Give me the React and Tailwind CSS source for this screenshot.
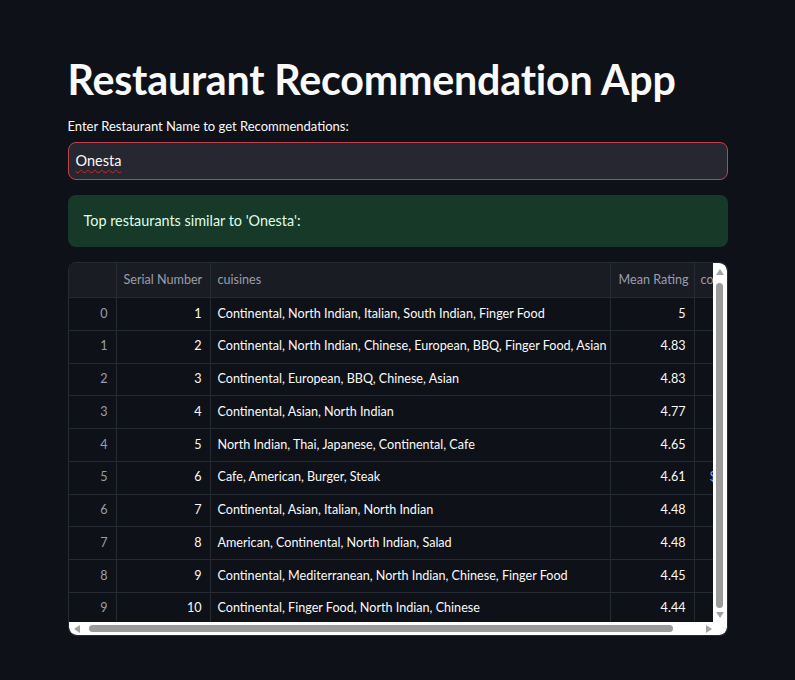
import React from 'react';

const rows = [
  [0, 1, 'Continental, North Indian, Italian, South Indian, Finger Food', '5', ''],
  [1, 2, 'Continental, North Indian, Chinese, European, BBQ, Finger Food, Asian', '4.83', ''],
  [2, 3, 'Continental, European, BBQ, Chinese, Asian', '4.83', ''],
  [3, 4, 'Continental, Asian, North Indian', '4.77', ''],
  [4, 5, 'North Indian, Thai, Japanese, Continental, Cafe', '4.65', ''],
  [5, 6, 'Cafe, American, Burger, Steak', '4.61', '$'],
  [6, 7, 'Continental, Asian, Italian, North Indian', '4.48', ''],
  [7, 8, 'American, Continental, North Indian, Salad', '4.48', ''],
  [8, 9, 'Continental, Mediterranean, North Indian, Chinese, Finger Food', '4.45', ''],
  [9, 10, 'Continental, Finger Food, North Indian, Chinese', '4.44', ''],
];

const cols = 'grid grid-cols-[48px_94px_400px_84px_120px]';

const Triangle = ({ dir }) => {
  const pts = {
    up: '0,6 4,0 8,6',
    down: '0,0 8,0 4,6',
    left: '6,0 6,8 0,4',
    right: '0,0 0,8 6,4',
  };
  const vertical = dir === 'up' || dir === 'down';
  return (
    <svg width={vertical ? 8 : 6} height={vertical ? 6 : 8} viewBox={vertical ? '0 0 8 6' : '0 0 6 8'}>
      <polygon points={pts[dir]} fill="#a3a3a3" />
    </svg>
  );
};

const DataTable = () => (
  <div className="relative mt-[15px] h-[374px] w-[660px] overflow-hidden rounded-lg border border-[#262a33]">
    <div className="h-[361px] w-[646px] overflow-hidden">
      <div className={`${cols} h-[35px] bg-[#1a1c24] text-[12.6px] leading-none whitespace-nowrap text-[#9a9ea9]`}>
        <div className="border-r border-b border-[#262a33]" />
        <div className="flex items-center border-r border-b border-[#262a33] pl-[7px]">Serial Number</div>
        <div className="flex items-center border-r border-b border-[#262a33] pl-[7px]">cuisines</div>
        <div className="flex items-center border-r border-b border-[#262a33] pl-[8px]">Mean Rating</div>
        <div className="flex items-center border-b border-[#262a33] pl-[6px]">cost</div>
      </div>
      {rows.map(([idx, serial, cuisine, rating, cost]) => (
        <div key={idx} className={`${cols} h-[32.75px] bg-[#0e1117] text-[12.6px] leading-none whitespace-nowrap text-[#fafafa]`}>
          <div className="flex items-center justify-end border-r border-b border-[#262a33] pr-[8px] text-[#9a9ea9]">{idx}</div>
          <div className="flex items-center justify-end border-r border-b border-[#262a33] pr-[8px]">{serial}</div>
          <div className="flex items-center overflow-hidden border-r border-b border-[#262a33] pl-[7px]">{cuisine}</div>
          <div className="flex items-center justify-end border-r border-b border-[#262a33] pr-[8px]">{rating}</div>
          <div className="flex items-center border-b border-[#262a33] pl-[15px] text-[#8fb3e0]">{cost}</div>
        </div>
      ))}
    </div>

    {/* vertical scrollbar */}
    <div className="absolute top-0 right-0 flex h-[361px] w-[14px] flex-col items-center rounded-tr-lg bg-white">
      <div className="mt-[6px]"><Triangle dir="up" /></div>
      <div className="mt-[8px] w-[7px] flex-1 rounded-full bg-[#9b9b9b]" />
      <div className="mt-[4px] mb-[6px]"><Triangle dir="down" /></div>
    </div>

    {/* horizontal scrollbar */}
    <div className="absolute right-0 bottom-0 left-0 flex h-[13px] items-center rounded-b-lg bg-white">
      <div className="ml-[5px]"><Triangle dir="left" /></div>
      <div className="ml-[9px] h-[7px] w-[584px] rounded-full bg-[#9b9b9b]" />
      <div className="ml-[33px]"><Triangle dir="right" /></div>
    </div>
  </div>
);

export default function App() {
  return (
    <div className="min-h-[680px] bg-[#0e1117] text-[#fafafa]" style={{ fontFamily: 'Lato, "Noto Sans", sans-serif' }}>
      <div className="mx-auto w-[660px] pt-[52px]">
        <h1 className="text-[41.2px] leading-[54px] font-bold tracking-[-0.2px]">Restaurant Recommendation App</h1>
        <label className="mt-[10px] block text-[13px] leading-[20px]">Enter Restaurant Name to get Recommendations:</label>
        <div className="mt-[6px] flex h-[38px] items-center rounded-lg border border-[#c0434c] bg-[#262730] px-[7px] text-[14.5px]">
          <span className="underline decoration-[#d02828] decoration-wavy decoration-1 underline-offset-[3px]">Onesta</span>
        </div>
        <div className="mt-[15px] flex h-[52px] items-center rounded-lg bg-[#173928] px-[16px] text-[14.4px] text-[#dffde9]">
          Top restaurants similar to 'Onesta':
        </div>
        <DataTable />
      </div>
    </div>
  );
}
